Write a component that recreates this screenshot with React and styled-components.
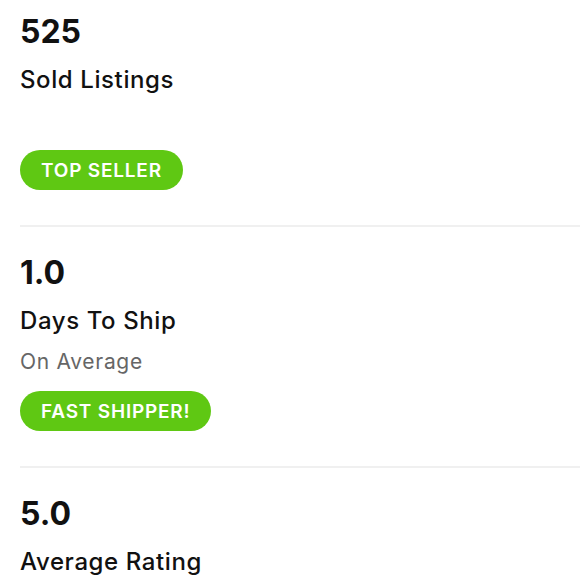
import React from "react";
import styled, { createGlobalStyle } from "styled-components";

const Global = createGlobalStyle`
  html, body { margin: 0; padding: 0; background: #fff; }
  body { font-family: "Inter", "Liberation Sans", sans-serif; -webkit-font-smoothing: antialiased; }
`;

const Page = styled.div`
  width: 580px;
  height: 580px;
  overflow: hidden;
  padding-left: 20px;
  box-sizing: border-box;
`;

const Section = styled.section`
  padding: ${(p) => (p.$first ? "10px" : "24px")} 0 35px;
  border-top: ${(p) => (p.$first ? "none" : "2px solid #f0f0f0")};
`;

const Value = styled.div`
  font-size: 32px;
  line-height: 44px;
  font-weight: 700;
  color: #111;
`;

const Label = styled.div`
  margin-top: 10px;
  font-size: 24px;
  line-height: 32px;
  font-weight: 500;
  letter-spacing: 0.6px;
  color: #111;
`;

const Sub = styled.div`
  margin-top: 9px;
  font-size: 21px;
  line-height: 32px;
  min-height: 32px;
  letter-spacing: 0.7px;
  color: #666;
`;

const Badge = styled.span`
  display: inline-flex;
  align-items: center;
  height: 40px;
  margin-top: 13px;
  padding: 0 21px;
  border-radius: 20px;
  background: #5fc813;
  color: #fff;
  font-size: 19px;
  font-weight: 600;
  letter-spacing: 0.8px;
`;

const stats = [
  { value: "525", label: "Sold Listings", sub: "", badge: "TOP SELLER" },
  { value: "1.0", label: "Days To Ship", sub: "On Average", badge: "FAST SHIPPER!" },
  { value: "5.0", label: "Average Rating", sub: "", badge: "" },
];

export default function App() {
  return (
    <Page>
      <Global />
      {stats.map((s, i) => (
        <Section key={s.value} $first={i === 0}>
          <Value>{s.value}</Value>
          <Label>{s.label}</Label>
          <Sub>{s.sub}</Sub>
          {s.badge && <Badge>{s.badge}</Badge>}
        </Section>
      ))}
    </Page>
  );
}
